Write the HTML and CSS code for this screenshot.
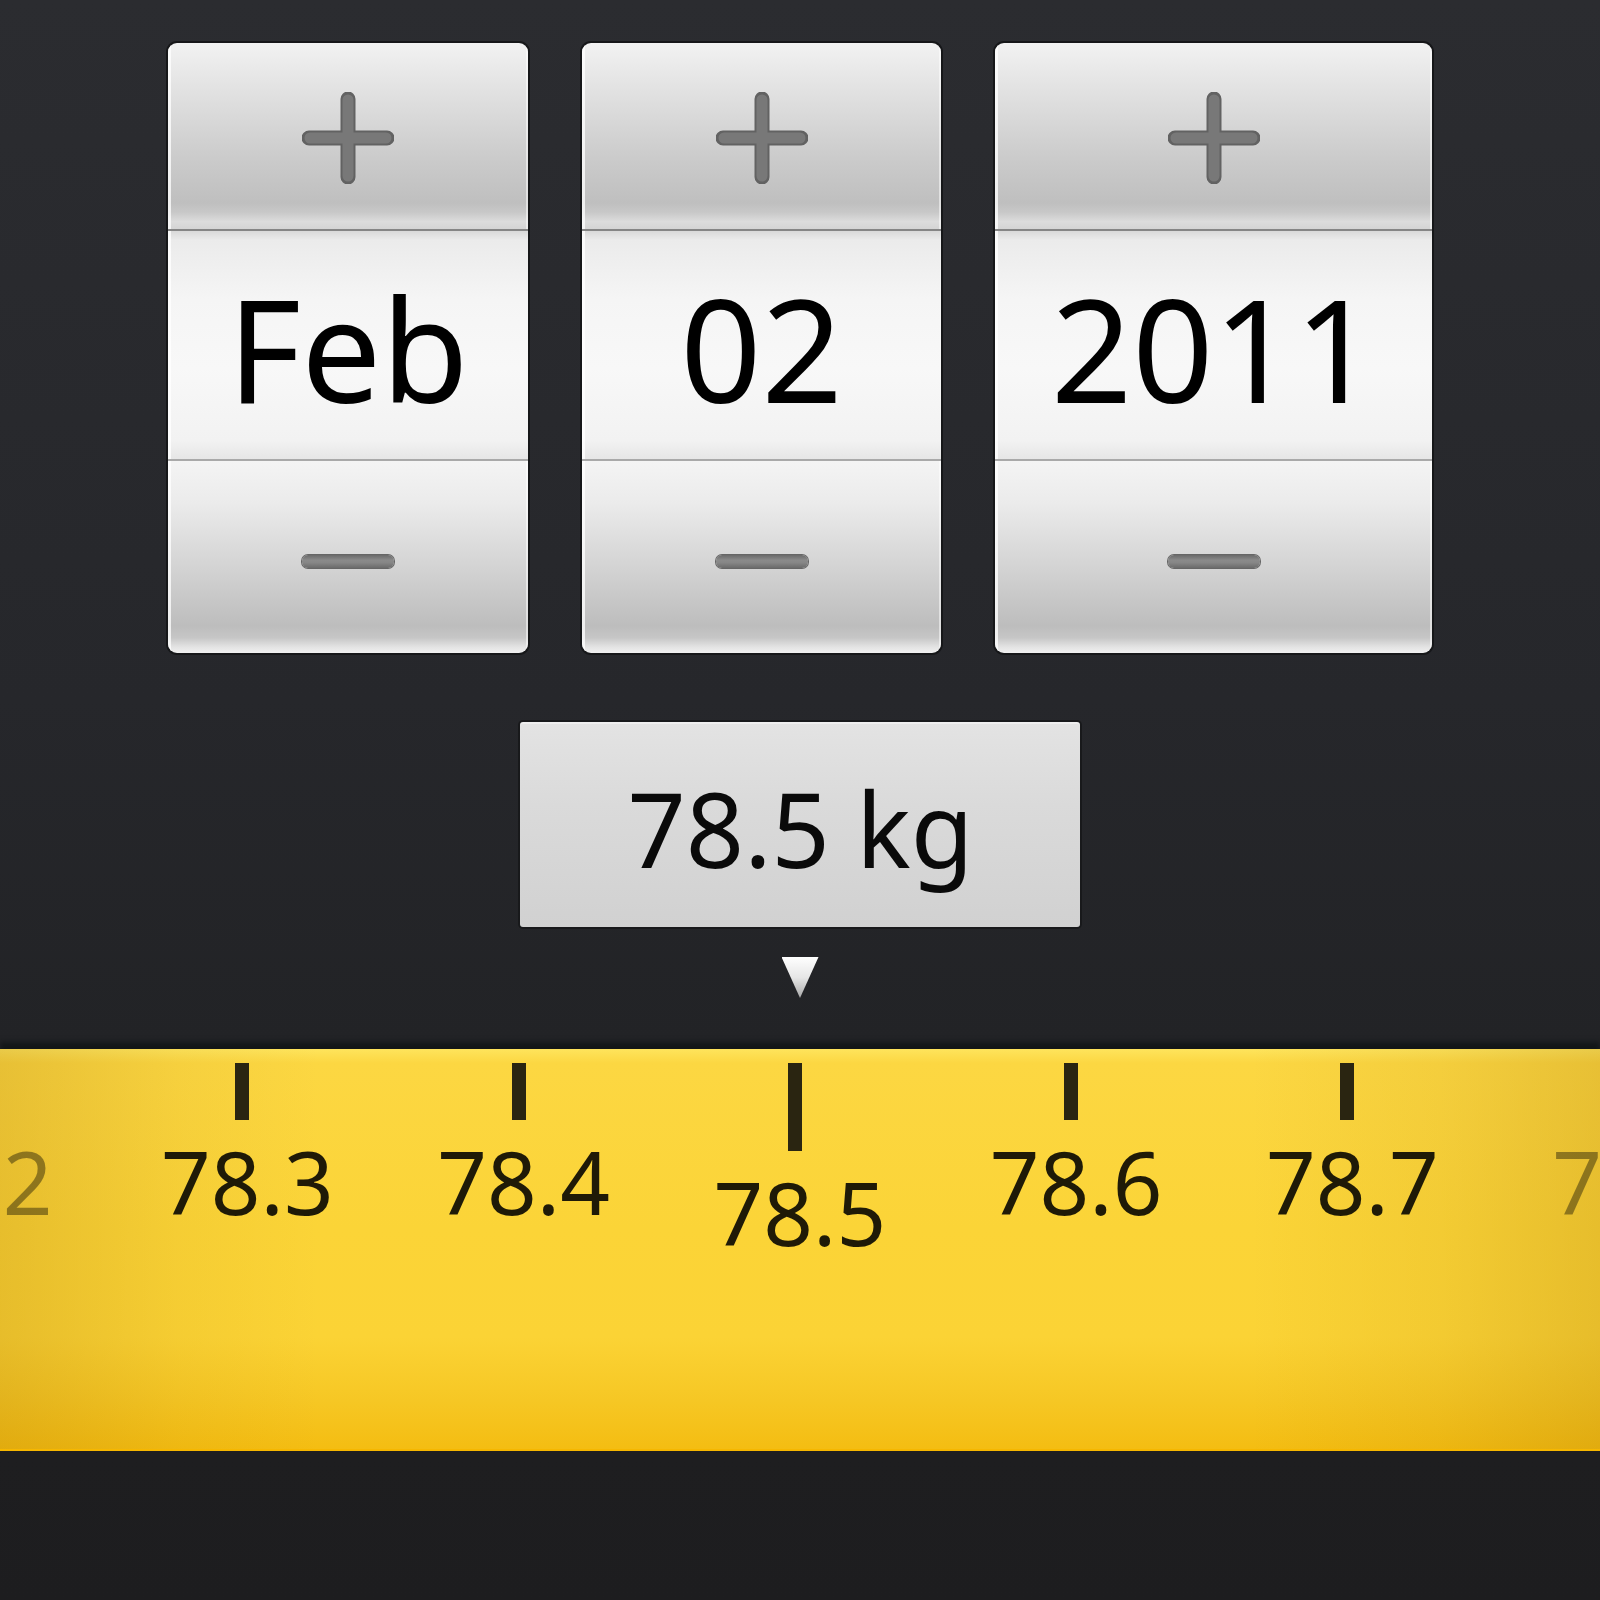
FILE: index.html
```html
<!DOCTYPE html>
<html lang="en">
<head>
    <meta charset="UTF-8">
    <title>Weight entry</title>
    <link rel="stylesheet" href="styles.css">
</head>
<body>
    <div class="screen">
        <!-- date pickers -->
        <div class="pickers">
            <div class="picker picker-month">
                <button class="step step-up">
                    <svg class="plus" width="92" height="92" viewBox="0 0 92 92">
                        <path d="M46 7 V85 M7 46 H85" stroke="#626262" stroke-width="15" stroke-linecap="round" fill="none"/>
                        <path d="M46 8 V84 M8 46 H84" stroke="#787878" stroke-width="11" stroke-linecap="round" fill="none"/>
                    </svg>
                </button>
                <div class="value"><span>Feb</span></div>
                <button class="step step-down"><i class="minus"></i></button>
            </div>
            <div class="picker picker-day">
                <button class="step step-up">
                    <svg class="plus" width="92" height="92" viewBox="0 0 92 92">
                        <path d="M46 7 V85 M7 46 H85" stroke="#626262" stroke-width="15" stroke-linecap="round" fill="none"/>
                        <path d="M46 8 V84 M8 46 H84" stroke="#787878" stroke-width="11" stroke-linecap="round" fill="none"/>
                    </svg>
                </button>
                <div class="value"><span>02</span></div>
                <button class="step step-down"><i class="minus"></i></button>
            </div>
            <div class="picker picker-year">
                <button class="step step-up">
                    <svg class="plus" width="92" height="92" viewBox="0 0 92 92">
                        <path d="M46 7 V85 M7 46 H85" stroke="#626262" stroke-width="15" stroke-linecap="round" fill="none"/>
                        <path d="M46 8 V84 M8 46 H84" stroke="#787878" stroke-width="11" stroke-linecap="round" fill="none"/>
                    </svg>
                </button>
                <div class="value"><span>2011</span></div>
                <button class="step step-down"><i class="minus"></i></button>
            </div>
        </div>

        <!-- current reading -->
        <div class="reading"><span>78.5 kg</span></div>
        <div class="pointer"></div>

        <!-- tape ruler -->
        <div class="ruler">
            <div class="scale">
                <div class="mark faded"><i class="tick"></i><span class="label">78.2</span></div>
                <div class="mark"><i class="tick"></i><span class="label">78.3</span></div>
                <div class="mark"><i class="tick"></i><span class="label">78.4</span></div>
                <div class="mark major"><i class="tick"></i><span class="label">78.5</span></div>
                <div class="mark"><i class="tick"></i><span class="label">78.6</span></div>
                <div class="mark"><i class="tick"></i><span class="label">78.7</span></div>
                <div class="mark faded"><i class="tick"></i><span class="label">78.8</span></div>
            </div>
        </div>
    </div>
</body>
</html>
```

FILE: styles.css
```css
body {
    margin: 0;
    font-family: 'Noto Sans', 'Open Sans', sans-serif;
    background: linear-gradient(#2b2c30 0, #26272b 700px, #222326 1040px, #1e1e20 1460px, #1d1d1f 100%);
    min-height: 1600px;
}
.screen {
    width: 1600px;
    overflow: hidden;
}

/* date pickers */
.pickers {
    display: flex;
    justify-content: center;
    gap: 54px;
    padding-top: 43px;
}
.picker {
    display: flex;
    flex-direction: column;
    border-radius: 9px;
    overflow: hidden;
    box-shadow: 0 0 0 2px #161719;
}
.picker-month { width: 360px; }
.picker-day { width: 359px; }
.picker-year { width: 437px; }

.step {
    display: flex;
    align-items: center;
    justify-content: center;
    border: none;
    padding: 0;
    margin: 0;
    width: 100%;
    box-sizing: border-box;
    box-shadow: inset 3px 0 0 rgba(255,255,255,0.75), inset -2px 0 0 rgba(255,255,255,0.5);
}
.step-up {
    height: 188px;
    padding-top: 4px;
    background: linear-gradient(#f2f2f2 0, #e2e2e2 25%, #cbcbcb 62%, #bfbfbf 86%, #c8c8c8 91%, #dcdcdc 96%, #d4d4d4 100%);
    border-bottom: 2px solid #858585;
}
.step-down {
    height: 192px;
    background: linear-gradient(#f4f4f4 0, #ebebeb 22%, #d0d0d0 60%, #bdbdbd 86%, #c6c6c6 92%, #e4e4e4 97%, #f0f0f0 100%);
}
.minus {
    display: block;
    width: 92px;
    height: 13px;
    margin-top: 8px;
    border-radius: 6px;
    background: linear-gradient(#6a6a6a, #8a8a8a 40%, #868686 60%, #6a6a6a);
    box-shadow: 0 0 0 1px #666;
}
.value {
    height: 230px;
    box-sizing: border-box;
    padding-top: 5px;
    display: flex;
    align-items: center;
    justify-content: center;
    background: linear-gradient(#d9d9d9 0, #ebebeb 4%, #f5f5f5 30%, #f8f8f8 60%, #f2f2f2 92%, #e6e6e6 100%);
    border-bottom: 2px solid #a9a9a9;
    box-shadow: inset 3px 0 0 rgba(255,255,255,0.8);
}
.value span {
    display: inline-block;
    font-size: 142px;
    line-height: 1;
    color: #000;
}

/* current reading */
.reading {
    width: 560px;
    height: 205px;
    margin: 69px auto 0;
    box-sizing: border-box;
    padding-top: 4px;
    display: flex;
    align-items: center;
    justify-content: center;
    border-radius: 3px;
    background: linear-gradient(#e3e3e3 0, #dadada 40%, #d1d1d1 100%);
    border-top: 2px solid #eeeeee;
    box-shadow: 0 0 0 2px #18191b;
}
.reading span {
    display: inline-block;
    font-size: 104px;
    line-height: 1;
    color: #0a0a0a;
    transform: scaleX(0.98);
}
.pointer {
    width: 37px;
    height: 41px;
    margin: 30px auto 0;
    clip-path: polygon(0 0, 100% 0, 50% 100%);
    background: linear-gradient(#ffffff 0, #e6e6e6 50%, #a9a9a9 100%);
}

/* tape ruler */
.ruler {
    margin-top: 51px;
    height: 402px;
    box-sizing: border-box;
    border-bottom: 2px solid #f6b700;
    box-shadow: 0 -7px 5px rgba(8,12,12,0.55), 0 7px 0 #060906, 0 14px 8px rgba(0,0,0,0.3);
    background:
        linear-gradient(90deg, rgba(150,100,0,0.2) 0, rgba(150,100,0,0.06) 180px, rgba(150,100,0,0) 320px, rgba(150,100,0,0) 1250px, rgba(150,100,0,0.08) 1440px, rgba(150,100,0,0.2) 100%),
        linear-gradient(#fee45c 0, #fcd742 14px, #fbd437 45%, #fbd335 72%, #f6c724 88%, #f4bd12 100%);
    overflow: hidden;
}
.scale {
    display: flex;
    padding-top: 14px;
    margin-left: -172px;
}
.mark {
    flex: 0 0 276.25px;
    display: flex;
    flex-direction: column;
    align-items: center;
}
.tick {
    display: block;
    width: 14px;
    height: 57px;
    background: #2a2511;
}
.major .tick {
    height: 88px;
}
.label {
    display: inline-block;
    margin-top: 18px;
    padding-left: 10px;
    font-size: 87px;
    line-height: 1;
    color: #1f1a07;
}
.faded .label {
    opacity: 0.45;
}
.faded:first-child .label {
    padding-left: 0;
}
.faded:last-child .label {
    padding-left: 30px;
}
```
